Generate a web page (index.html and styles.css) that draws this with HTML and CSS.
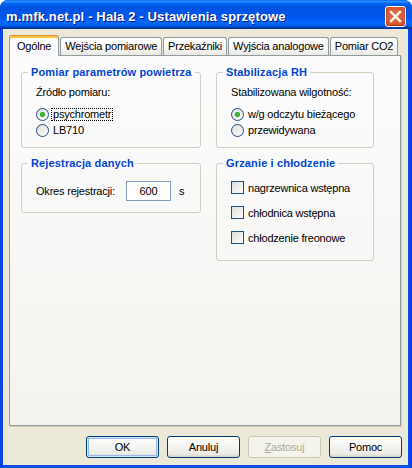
FILE: index.html
```html
<!DOCTYPE html>
<html lang="pl">
<head>
<meta charset="utf-8">
<title>Ustawienia sprzętowe</title>
<link rel="stylesheet" href="styles.css">
</head>
<body>
<div class="window">
  <div class="titlebar">
    <span class="title">m.mfk.net.pl - Hala 2 - Ustawienia sprzętowe</span>
    <span class="close" aria-label="Zamknij"><svg width="19" height="19" viewBox="0 0 19 19"><path d="M5 5 L14 14 M14 5 L5 14" stroke="#fff" stroke-width="2.3" stroke-linecap="square"/></svg></span>
  </div>
  <div class="client">
    <div class="tabs">
      <div class="tab active">Ogólne</div>
      <div class="tab">Wejścia pomiarowe</div>
      <div class="tab">Przekaźniki</div>
      <div class="tab">Wyjścia analogowe</div>
      <div class="tab">Pomiar CO2</div>
    </div>
    <div class="panel">
      <div class="groups">
        <fieldset class="group">
          <legend>Pomiar parametrów powietrza</legend>
          <div class="body body-radio">
            <div class="caption">Źródło pomiaru:</div>
            <div class="options">
              <div class="option"><span class="radio checked"></span><span class="opt-label focused">psychrometr</span></div>
              <div class="option"><span class="radio"></span><span class="opt-label">LB710</span></div>
            </div>
          </div>
        </fieldset>
        <fieldset class="group">
          <legend>Stabilizacja RH</legend>
          <div class="body body-radio">
            <div class="caption">Stabilizowana wilgotność:</div>
            <div class="options">
              <div class="option"><span class="radio checked"></span><span class="opt-label">w/g odczytu bieżącego</span></div>
              <div class="option"><span class="radio"></span><span class="opt-label">przewidywana</span></div>
            </div>
          </div>
        </fieldset>
        <fieldset class="group">
          <legend>Rejestracja danych</legend>
          <div class="body body-field">
            <div class="field-row">
              <span class="field-label">Okres rejestracji:</span>
              <input class="field" type="text" value="600">
              <span class="unit">s</span>
            </div>
          </div>
        </fieldset>
        <fieldset class="group">
          <legend>Grzanie i chłodzenie</legend>
          <div class="body body-checks">
            <div class="check-row"><span class="check"></span><span>nagrzewnica wstępna</span></div>
            <div class="check-row"><span class="check"></span><span>chłodnica wstępna</span></div>
            <div class="check-row"><span class="check"></span><span>chłodzenie freonowe</span></div>
          </div>
        </fieldset>
      </div>
    </div>
    <div class="buttons">
      <button class="btn default">OK</button>
      <button class="btn">Anuluj</button>
      <button class="btn disabled"><u>Z</u>astosuj</button>
      <button class="btn">Pomoc</button>
    </div>
  </div>
</div>
</body>
</html>
```

FILE: styles.css
```css
* { box-sizing: border-box; }
html, body { margin: 0; padding: 0; background: #ffffff; }
body {
  font-family: "Liberation Sans", Arial, sans-serif;
  font-size: 11px;
  letter-spacing: -0.2px;
  color: #000;
}

.window {
  width: 412px;
  height: 468px;
  display: flex;
  flex-direction: column;
  background: linear-gradient(to right, #0831D9 0, #0A48E8 1px, #0750EA 3px, #0750EA 408px, #0A48E8 410px, #0831D9 412px);
  border-radius: 8px 8px 0 0;
  overflow: hidden;
}

.titlebar {
  flex: none;
  height: 29px;
  padding: 3px 6px 0 6px;
  display: flex;
  align-items: center;
  justify-content: space-between;
  background: linear-gradient(to bottom, #0058EE 0%, #3593FF 4%, #288EFF 6%, #127DFF 8%, #036FFC 10%, #0262EE 14%, #0057E5 20%, #0054E3 24%, #0055EB 56%, #005BF5 66%, #026AFE 76%, #0062EF 86%, #0052D6 92%, #0040AB 94%, #003092 100%);
}
.title {
  color: #fff;
  font-family: "Liberation Sans", Arial, sans-serif;
  font-weight: bold;
  font-size: 13px;
  letter-spacing: 0.15px;
  text-shadow: 1px 1px 0 #0A1883;
}
.close {
  width: 21px;
  height: 21px;
  border: 1px solid #fff;
  border-radius: 3px;
  display: flex;
  align-items: center;
  justify-content: center;
  background: radial-gradient(circle at 50% 45%, #E8704C 0%, #DE5A34 55%, #C8431D 100%);
  box-shadow: inset 0 -1px 1px #B33710;
}
.close svg { display: block; }

.client {
  flex: 1;
  margin: 0 4px 3px 3px;
  background: #ECE9D8;
  display: flex;
  flex-direction: column;
  padding: 6px 0 7px 6px;
}

.tabs {
  display: flex;
  align-items: flex-end;
  height: 21px;
  margin-bottom: -1px;
  position: relative;
  z-index: 1;
}
.tab {
  height: 18px;
  margin-bottom: 1px;
  margin-right: 1px;
  padding: 0 4px;
  border: 1px solid #919B9C;
  border-bottom: none;
  border-radius: 3px 3px 0 0;
  background: linear-gradient(#FFFFFF, #F7F7F4 60%, #E9E8E2);
  line-height: 17px;
  white-space: nowrap;
}
.tab.active {
  height: 21px;
  margin-bottom: 0;
  padding: 0 7px;
  border-top-color: #E68B2C;
  box-shadow: inset 0 2px 0 #FFC73C;
  background: #FCFCFE;
  line-height: 20px;
}

.panel {
  flex: 1;
  margin-right: 7px;
  border: 1px solid #919B9C;
  background: linear-gradient(#FCFCFE, #F4F3EE);
  box-shadow: 1px 1px 0 #D0CEBF;
  padding: 10px 0 0 11px;
}

.groups {
  display: grid;
  grid-template-columns: 180px 158px;
  column-gap: 15px;
  row-gap: 9px;
  align-items: start;
}

.group {
  margin: 0;
  padding: 0;
  min-width: 0;
  border: 1px solid #D0D0BF;
  border-radius: 3px;
}
.group legend {
  margin-left: 6px;
  padding: 0 3px;
  line-height: 13px;
  font-weight: bold;
  letter-spacing: 0.15px;
  color: #0046D5;
}

.body { padding: 0 14px; }
.body-radio { padding-top: 7px; padding-bottom: 9px; }
.caption { line-height: 13px; }
.options { margin-top: 7px; }
.option { height: 16px; display: flex; align-items: center; }
.radio {
  flex: none;
  width: 13px;
  height: 13px;
  border-radius: 50%;
  border: 1px solid #1C5180;
  background: linear-gradient(135deg, #DCDCD7, #FFFFFF);
}
.radio.checked {
  background: radial-gradient(circle at 50% 50%, #5BD25B 0, #21A121 2px, rgba(33,161,33,0) 3px), linear-gradient(135deg, #DCDCD7, #FFFFFF);
}
.opt-label {
  margin-left: 2px;
  padding: 0 1px;
  border: 1px dotted transparent;
  line-height: 11px;
}
.opt-label.focused { border-color: #000; }

.body-field { padding-top: 11px; padding-bottom: 11px; }
.field-row { height: 20px; display: flex; align-items: center; }
.field-label { width: 90px; flex: none; }
.field {
  width: 45px;
  height: 20px;
  border: 1px solid #7F9DB9;
  background: #fff;
  font: inherit;
  letter-spacing: inherit;
  text-align: center;
  padding: 0;
  color: #000;
}
.unit { margin-left: 8px; }

.body-checks {
  padding-top: 11px;
  padding-bottom: 16px;
  display: flex;
  flex-direction: column;
  gap: 12px;
}
.check-row { height: 13px; display: flex; align-items: center; }
.check {
  flex: none;
  width: 13px;
  height: 13px;
  margin-right: 4px;
  border: 1px solid #1C5180;
  background: linear-gradient(135deg, #DCDCD7, #FFFFFF);
}

.buttons {
  display: flex;
  justify-content: flex-end;
  gap: 8px;
  margin-top: 10px;
  padding-right: 6px;
}
.btn {
  width: 73px;
  height: 22px;
  padding: 0;
  border: 1px solid #003C74;
  border-radius: 3px;
  background: linear-gradient(#FFFFFF, #F3F3EF 50%, #ECEBE6 85%, #D6D0C5);
  font: inherit;
  letter-spacing: inherit;
  color: #000;
  display: flex;
  align-items: center;
  justify-content: center;
}
.btn.default {
  box-shadow: inset 0 0 0 1px #CEE7FF, inset 0 0 0 2px #98B8EA;
}
.btn.disabled {
  border-color: #C9C7BA;
  background: #F5F4EA;
  color: #ACA899;
}
```
